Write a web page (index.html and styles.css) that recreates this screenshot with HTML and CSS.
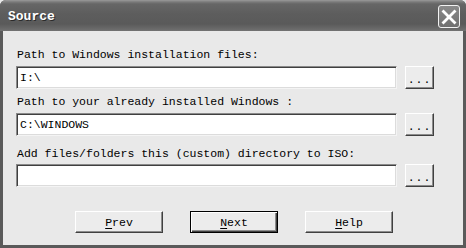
FILE: index.html
```html
<!DOCTYPE html>
<html lang="en">
<head>
    <meta charset="UTF-8">
    <title>Source</title>
    <link rel="stylesheet" href="styles.css">
</head>
<body>
    <div class="window">
        <div class="titlebar">
            <span class="title">Source</span>
            <button class="close-btn" aria-label="Close">
                <svg width="16" height="16" viewBox="0 0 16 16">
                    <path d="M2.5 2.5 L13.5 13.5 M13.5 2.5 L2.5 13.5" stroke="#fff" stroke-width="2.8" stroke-linecap="square"/>
                </svg>
            </button>
        </div>

        <div class="client">
            <div class="group first">
                <label>Path to Windows installation files:</label>
                <div class="row">
                    <div class="field">I:\</div>
                    <button class="btn browse">...</button>
                </div>
            </div>

            <div class="group second">
                <label>Path to your already installed Windows :</label>
                <div class="row">
                    <div class="field">C:\WINDOWS</div>
                    <button class="btn browse">...</button>
                </div>
            </div>

            <div class="group third">
                <label>Add files/folders this (custom) directory to ISO:</label>
                <div class="row">
                    <div class="field"></div>
                    <button class="btn browse">...</button>
                </div>
            </div>

            <div class="actions">
                <button class="btn action"><u>P</u>rev</button>
                <button class="btn action default"><u>N</u>ext</button>
                <button class="btn action"><u>H</u>elp</button>
            </div>
        </div>
    </div>
</body>
</html>
```

FILE: styles.css
```css
* {
    margin: 0;
    padding: 0;
    box-sizing: border-box;
}

body {
    font-family: "Liberation Mono", "DejaVu Sans Mono", monospace;
    font-size: 11.5px;
    color: #000;
    background: #e9e9e9;
    width: 466px;
    height: 248px;
    overflow: hidden;
}

.window {
    width: 466px;
    height: 248px;
    display: flex;
    flex-direction: column;
    background: #5a5a5a;
    border-radius: 6px 6px 0 0;
    overflow: hidden;
}

/* title bar */
.titlebar {
    height: 31px;
    display: flex;
    align-items: center;
    justify-content: space-between;
    padding: 0 6px 0 8px;
    background: linear-gradient(#9a9a9a 0, #7a7a7a 2px, #666 4px, #5d5d5d 14px, #5a5a5a 24px, #6a6a6a 29px, #737373 31px);
}

.title {
    font-family: "Liberation Mono", monospace;
    font-weight: 700;
    font-size: 13px;
    color: #fff;
    text-shadow: 1px 1px 0 #2a2a2a;
    margin-top: 2px;
}

.close-btn {
    width: 22px;
    height: 23px;
    margin-top: 2px;
    border: 1px solid #f2f2f2;
    border-radius: 3px;
    background: linear-gradient(#8a8a8a, #707070);
    display: flex;
    align-items: center;
    justify-content: center;
}

/* dialog body */
.client {
    flex: 1;
    margin: 0 3px 3px 3px;
    background: #e9e9e9;
    padding: 17px 29px 0 13px;
}

label {
    display: block;
    height: 14px;
    line-height: 14px;
    padding-left: 1px;
    white-space: nowrap;
}

.row {
    display: flex;
    gap: 8px;
    margin-top: 4px;
}

.second {
    margin-top: 6px;
}

.third {
    margin-top: 11px;
}

.third .row {
    margin-top: 3px;
}

.field {
    flex: 1;
    height: 23px;
    background: #fff;
    border-top: 1px solid #8a8a8a;
    border-left: 1px solid #8a8a8a;
    border-right: 1px solid #f4f4f4;
    border-bottom: 1px solid #f4f4f4;
    box-shadow: inset 1px 1px 0 #404040, inset -1px -1px 0 #dcdcdc;
    padding: 3px 3px 0 3px;
    font-family: "Liberation Mono", monospace;
    font-size: 11.5px;
    line-height: 15px;
}

.btn {
    font-family: "Liberation Mono", monospace;
    font-size: 11.5px;
    color: #000;
    background: #ececec;
    border-top: 1px solid #fff;
    border-left: 1px solid #fff;
    border-right: 1px solid #404040;
    border-bottom: 1px solid #404040;
    box-shadow: inset -1px -1px 0 #8c8c8c;
}

.browse {
    width: 29px;
    height: 23px;
    padding-top: 4px;
    letter-spacing: 1px;
}

.actions {
    display: flex;
    gap: 27px;
    margin-top: 24px;
    padding-left: 59px;
}

.action {
    width: 88px;
    height: 22px;
}

.action u {
    text-decoration-thickness: 1px;
    text-underline-offset: 2px;
}

.action.default {
    border: 1px solid #000;
    box-shadow: inset 1px 1px 0 #fff, inset -1px -1px 0 #404040, inset -2px -2px 0 #8c8c8c;
}
```
